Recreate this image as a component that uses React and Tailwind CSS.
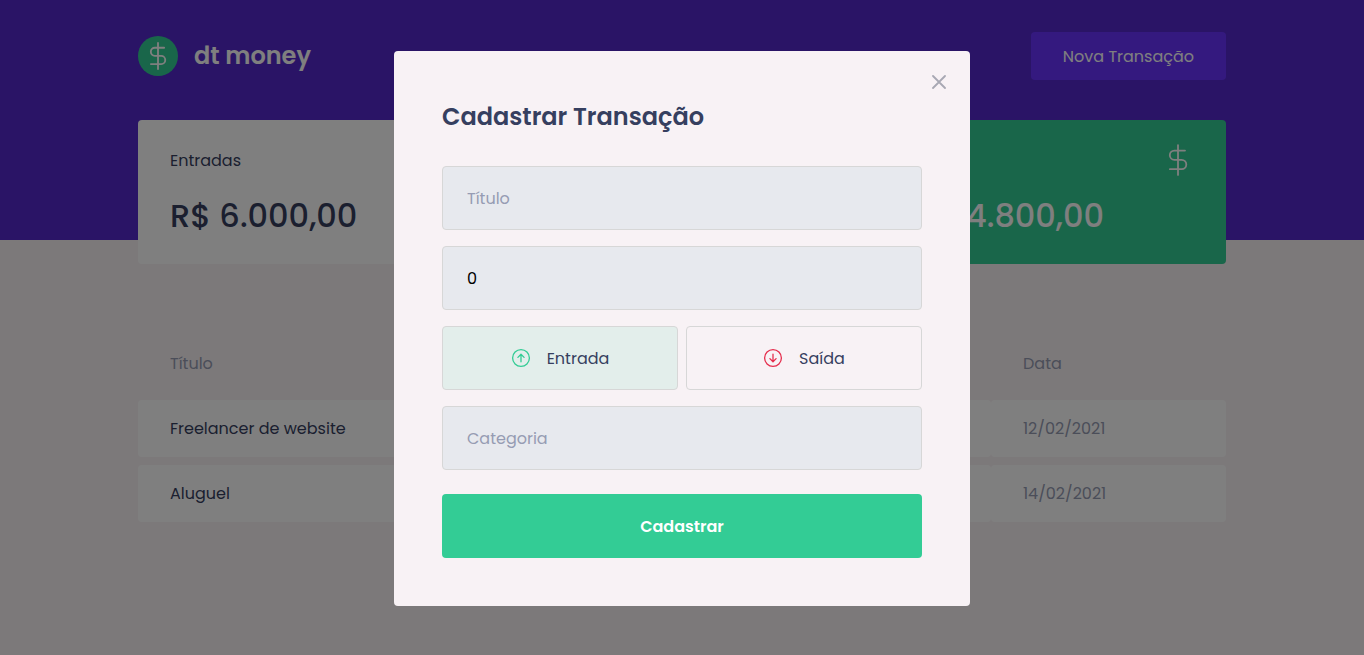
import { useState } from "react";

const transactions = [
  { title: "Freelancer de website", amount: "R$ 6.000,00", category: "Dev", date: "12/02/2021" },
  { title: "Aluguel", amount: "-R$ 1.200,00", category: "Casa", date: "14/02/2021" },
];

const fieldClass =
  "h-16 w-full rounded border border-[#d7d7d7] bg-[#e7e9ee] px-6 pt-0.5 text-base font-normal text-black placeholder:text-[#969cb3] placeholder:opacity-100";

function DollarIcon({ className, strokeWidth }) {
  return (
    <svg className={className} viewBox="0 0 32 32" fill="none" stroke="currentColor" strokeWidth={strokeWidth} strokeLinecap="round" strokeLinejoin="round" aria-hidden="true">
      <path d="M16 1.1v29.8" />
      <path d="M23 6.6H12.4a4.6 4.6 0 0 0 0 9.2h7.2a4.7 4.7 0 0 1 0 9.4H7.9" />
    </svg>
  );
}

function ArrowCircleIcon({ className, down }) {
  return (
    <svg className={className} viewBox="0 0 20 20" fill="none" stroke="currentColor" strokeWidth="1.3" strokeLinecap="round" strokeLinejoin="round" aria-hidden="true">
      <circle cx="10" cy="10" r="8.4" />
      <path d={down ? "M10 6.2v7.4M6.9 10.6l3.1 3.1 3.1-3.1" : "M10 13.8V6.4M6.9 9.4L10 6.3l3.1 3.1"} />
    </svg>
  );
}

function SummaryCard({ label, value, icon, highlight }) {
  return (
    <article className={highlight ? "rounded bg-[#33cc95] px-8 py-6 text-white" : "rounded bg-white px-8 py-6 text-[#363f5f]"}>
      <header className="flex h-8 items-center justify-between">
        <p className="pt-0.5 text-base">{label}</p>
        <span className={highlight ? "text-white" : "text-[#33cc95]"}>{icon}</span>
      </header>
      <strong className="mt-4 block whitespace-nowrap text-[32px] font-medium leading-12">{value}</strong>
    </article>
  );
}

function Header() {
  return (
    <header className="bg-[#5429cc]">
      <div className="mx-auto flex max-w-[1120px] items-center justify-between px-4 pt-8 pb-40">
        <div className="flex items-center gap-4">
          <span className="flex size-10 items-center justify-center rounded-full bg-[#33cc95] text-white">
            <DollarIcon className="size-7" strokeWidth="2.1" />
          </span>
          <span className="text-2xl font-semibold leading-12 text-white">dt money</span>
        </div>
        <button type="button" className="h-12 rounded bg-[#6933ff] px-8 pt-0.5 text-base text-white">
          Nova Transação
        </button>
      </div>
    </header>
  );
}

function TransactionsTable() {
  return (
    <table className="mt-16 w-full table-fixed border-separate border-spacing-x-0 border-spacing-y-2 text-left text-base text-[#969cb3]">
      <colgroup>
        <col className="w-[36%]" />
        <col />
        <col />
        <col className="w-[235px]" />
      </colgroup>
      <thead>
        <tr>
          {["Título", "Valor", "Categoria", "Data"].map((name) => (
            <th key={name} className="px-8 py-4 font-normal">{name}</th>
          ))}
        </tr>
      </thead>
      <tbody>
        {transactions.map((item) => (
          <tr key={item.title} className="h-[57px]">
            <td className="rounded bg-white px-8 py-4 text-[#363f5f]">{item.title}</td>
            <td className="rounded bg-white px-8 py-4">{item.amount}</td>
            <td className="rounded bg-white px-8 py-4">{item.category}</td>
            <td className="rounded bg-white px-8 py-4">{item.date}</td>
          </tr>
        ))}
      </tbody>
    </table>
  );
}

function TransactionModal() {
  const [type, setType] = useState("deposit");
  const typeClass = "flex h-16 items-center justify-center gap-4 rounded border border-[#d7d7d7] text-base text-[#363f5f]";
  return (
    <div className="fixed inset-0 flex items-center justify-center bg-black/50 pt-px">
      <div role="dialog" aria-modal="true" aria-labelledby="modal-title" className="relative w-full max-w-[576px] rounded bg-[#f8f2f5] p-12">
        <button type="button" aria-label="Fechar" className="absolute top-6 right-6 text-[#a8a8b3]">
          <svg className="block size-3.5" viewBox="5 5 14 14" fill="none" stroke="currentColor" strokeWidth="1.8" strokeLinecap="round" aria-hidden="true">
            <path d="M18 6L6 18M6 6l12 12" />
          </svg>
        </button>
        <form onSubmit={(event) => event.preventDefault()}>
          <h2 id="modal-title" className="mb-8 text-2xl font-semibold leading-[35px] text-[#363f5f]">
            Cadastrar Transação
          </h2>
          <div className="flex flex-col gap-4">
            <input className={fieldClass} aria-label="Título" placeholder="Título" />
            <input className={fieldClass} aria-label="Valor" type="number" defaultValue={0} />
            <div className="grid grid-cols-2 gap-2">
              <button
                type="button"
                aria-pressed={type === "deposit"}
                onClick={() => setType("deposit")}
                className={type === "deposit" ? `${typeClass} bg-[#33cc95]/10` : typeClass}
              >
                <ArrowCircleIcon className="size-5 text-[#33cc95]" />
                <span className="pt-0.5">Entrada</span>
              </button>
              <button
                type="button"
                aria-pressed={type === "withdraw"}
                onClick={() => setType("withdraw")}
                className={type === "withdraw" ? `${typeClass} bg-[#e52e4d]/10` : typeClass}
              >
                <ArrowCircleIcon className="size-5 text-[#e52e4d]" down />
                <span className="pt-0.5">Saída</span>
              </button>
            </div>
            <input className={fieldClass} aria-label="Categoria" placeholder="Categoria" />
          </div>
          <button type="submit" className="mt-6 h-16 w-full rounded bg-[#33cc95] pt-0.5 text-base font-semibold text-white">
            Cadastrar
          </button>
        </form>
      </div>
    </div>
  );
}

export default function App() {
  return (
    <div className="min-h-screen bg-[#f8f2f5] font-['Poppins',Inter,sans-serif]">
      <Header />
      <main className="mx-auto max-w-[1120px] px-4">
        <section className="-mt-30 grid grid-cols-3 gap-8">
          <SummaryCard label="Entradas" value="R$ 6.000,00" icon={<ArrowCircleIcon className="size-8" />} />
          <SummaryCard label="Saídas" value="-R$ 1.200,00" icon={<ArrowCircleIcon className="size-8" down />} />
          <SummaryCard label="Total" value="R$ 4.800,00" icon={<DollarIcon className="size-8" strokeWidth="1.8" />} highlight />
        </section>
        <TransactionsTable />
      </main>
      <TransactionModal />
    </div>
  );
}
